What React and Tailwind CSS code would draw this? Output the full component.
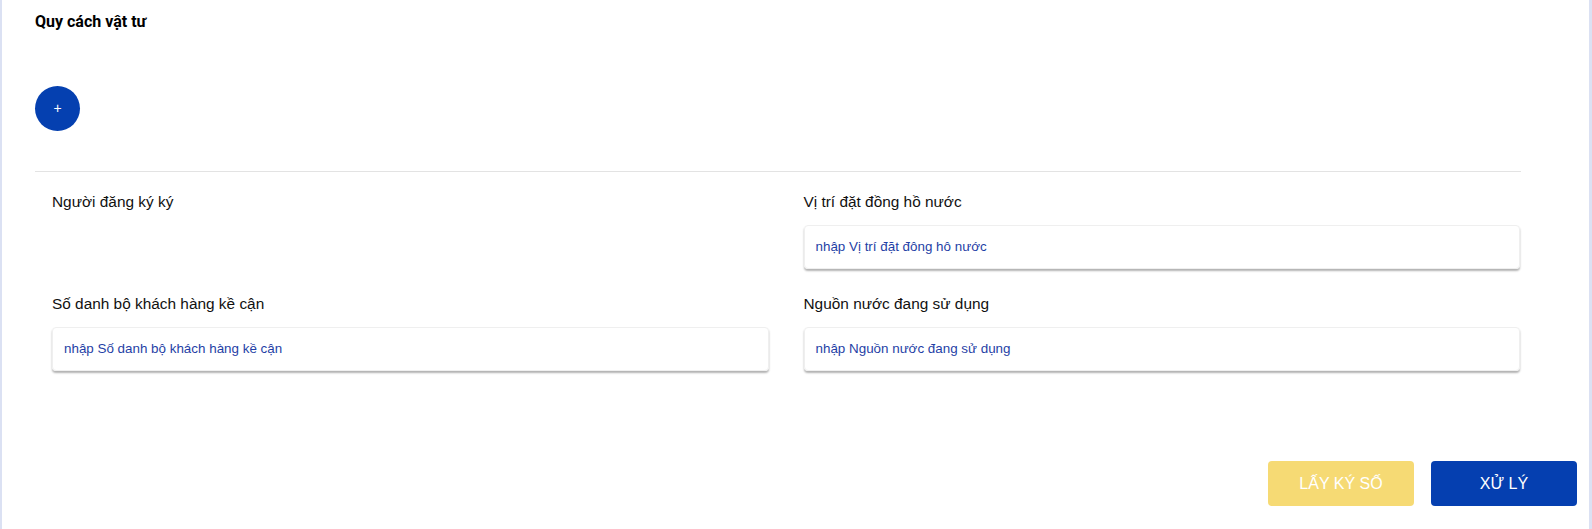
export default function App() {
  const font = { fontFamily: '"Liberation Sans", Arial, sans-serif' };
  return (
    <div
      className="flex flex-col h-[529px] bg-white border-l-2 border-r-[3px] border-[#dbe1f3] overflow-hidden"
      style={font}
    >
      {/* Quy cách vật tư */}
      <div className="pl-[33px] pt-[12px] w-[1519px]">
        <h3 className="text-[16px] leading-[20px] font-bold text-black font-['Roboto',sans-serif]">
          Quy cách vật tư
        </h3>
        <button className="mt-[54px] w-[45px] h-[45px] rounded-full bg-[#0540b0] text-white text-[14px] flex items-center justify-center">
          +
        </button>
        <div className="mt-[40px] border-t border-[#e3e3e3]" />

        {/* Form */}
        <div className="grid grid-cols-2 gap-x-[35px] gap-y-[25px] pt-[20px] pl-[17px] pr-[1px]">
          <div>
            <label className="block text-[15.4px] leading-[20px] text-[#111]">Người đăng ký ký</label>
          </div>
          <div>
            <label className="block text-[15.4px] leading-[20px] text-[#111]">Vị trí đặt đồng hồ nước</label>
            <div className="mt-[13px] h-[44px] flex items-center px-[11px] rounded-[4px] border border-[#efefef] shadow-[0_2px_2px_rgba(0,0,0,0.3)] text-[13.4px] text-[#1f3fa6]">
              nhập Vị trí đặt đông hô nước
            </div>
          </div>
          <div>
            <label className="block text-[15.4px] leading-[20px] text-[#111]">Số danh bộ khách hàng kề cận</label>
            <div className="mt-[13px] h-[44px] flex items-center px-[11px] rounded-[4px] border border-[#efefef] shadow-[0_2px_2px_rgba(0,0,0,0.3)] text-[13.4px] text-[#1f3fa6]">
              nhập Số danh bộ khách hàng kề cận
            </div>
          </div>
          <div>
            <label className="block text-[15.4px] leading-[20px] text-[#111]">Nguồn nước đang sử dụng</label>
            <div className="mt-[13px] h-[44px] flex items-center px-[11px] rounded-[4px] border border-[#efefef] shadow-[0_2px_2px_rgba(0,0,0,0.3)] text-[13.4px] text-[#1f3fa6]">
              nhập Nguồn nước đang sử dụng
            </div>
          </div>
        </div>
      </div>

      {/* Actions */}
      <div className="mt-[90px] flex justify-end gap-[17px] pr-[12px]">
        <button className="w-[146px] h-[45px] rounded-[4px] bg-[#f6da74] text-white text-[16px]">
          LẤY KÝ SỐ
        </button>
        <button className="w-[146px] h-[45px] rounded-[4px] bg-[#053fb0] text-white text-[16px]">
          XỬ LÝ
        </button>
      </div>
    </div>
  );
}
